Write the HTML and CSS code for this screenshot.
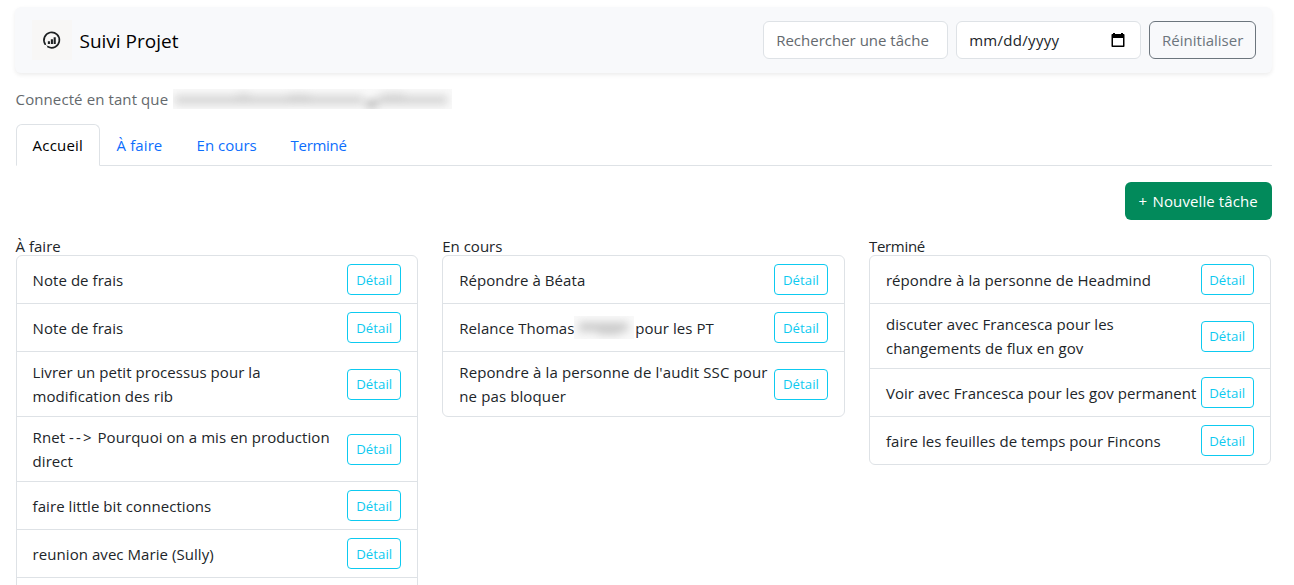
FILE: index.html
```html
<!DOCTYPE html>
<html lang="fr">
<head>
<meta charset="utf-8">
<title>Suivi Projet</title>
<link rel="stylesheet" href="styles.css">
</head>
<body>
<div class="container">
  <header class="topbar">
    <div class="brand">
      <span class="logo">
        <svg width="40" height="40" viewBox="0 0 40 40" fill="none">
          <path d="M13.2 24.2A7.7 7.7 0 1 1 16 26.8" stroke="#1d2022" stroke-width="1.7" stroke-linecap="round"/>
          <path d="M14.7 25.6l1.1.9" stroke="#1d2022" stroke-width="1"/>
          <path d="M16.9 21.3v2.7M19.9 19.3v4.7M22.7 17.2v6.8" stroke="#1d2022" stroke-width="2.1"/>
        </svg>
      </span>
      <span class="title">Suivi Projet</span>
    </div>
    <div class="filters">
      <input class="field" type="text" placeholder="Rechercher une tâche">
      <div class="field date"><span>mm/dd/yyyy</span>
        <svg width="14" height="14" viewBox="0 0 14 14"><path fill="#000" fill-rule="evenodd" d="M2 0h2v1h6V0h2v1h.5c.6 0 1 .4 1 1v11c0 .6-.4 1-1 1h-11c-.6 0-1-.4-1-1V2c0-.6.4-1 1-1H2zM2 5v7.5h10V5z"/></svg>
      </div>
      <button class="btn reset">Réinitialiser</button>
    </div>
  </header>
  <p class="user"><span>Connecté en tant que</span>
    <span class="redacted email">
      <svg width="279" height="20" viewBox="0 0 279 20"><g class="smudge">
        <path d="M2 11h188M204 11h70" stroke="#8b8b8b" stroke-width="8" opacity=".36"/>
        <path d="M64 6h13M115 7h22M210 6h22" stroke="#9a9a9a" stroke-width="4" opacity=".25"/>
        <path d="M193 15h11" stroke="#555" stroke-width="6" opacity=".5"/>
      </g></svg>
    </span>
  </p>
  <nav class="tabs">
    <a class="tab active">Accueil</a><a class="tab t-todo">À faire</a><a class="tab t-doing">En cours</a><a class="tab t-done">Terminé</a>
  </nav>
  <div class="actions"><button class="btn create"><span class="plus">+</span> Nouvelle tâche</button></div>
  <main class="board">
    <section>
      <h2>À faire</h2>
      <ul class="list">
        <li><span>Note de frais</span><button class="detail">Détail</button></li>
        <li><span>Note de frais</span><button class="detail">Détail</button></li>
        <li><span>Livrer un petit processus pour la<br>modification des rib</span><button class="detail">Détail</button></li>
        <li><span>Rnet <span class="arrow">--&gt;</span> Pourquoi on a mis en production<br>direct</span><button class="detail">Détail</button></li>
        <li><span>faire little bit connections</span><button class="detail">Détail</button></li>
        <li><span>reunion avec Marie (Sully)</span><button class="detail">Détail</button></li>
        <li></li>
      </ul>
    </section>
    <section>
      <h2>En cours</h2>
      <ul class="list">
        <li><span>Répondre à Béata</span><button class="detail">Détail</button></li>
        <li><span class="with-name"><span class="before">Relance Thomas</span><span class="redacted name"><svg width="60" height="23" viewBox="0 0 60 23"><path class="smudge" d="M5 11h49M24 14h22" stroke="#777" stroke-width="9" opacity=".36"/></svg></span><span>pour les PT</span></span><button class="detail">Détail</button></li>
        <li><span class="wide">Repondre à la personne de l'audit SSC pour<br>ne pas bloquer</span><button class="detail">Détail</button></li>
      </ul>
    </section>
    <section class="done">
      <h2>Terminé</h2>
      <ul class="list">
        <li><span>répondre à la personne de Headmind</span><button class="detail">Détail</button></li>
        <li><span>discuter avec Francesca pour les<br>changements de flux en gov</span><button class="detail">Détail</button></li>
        <li><span>Voir avec Francesca pour les gov permanent</span><button class="detail">Détail</button></li>
        <li><span>faire les feuilles de temps pour Fincons</span><button class="detail">Détail</button></li>
      </ul>
    </section>
  </main>
</div>
</body>
</html>
```
FILE: styles.css
```css
* { box-sizing: border-box; }
html { overflow: hidden; height: 100%; }
body { margin: 0; height: 100%; overflow: hidden; background: #fff; color: #212529; font: 15px/24px "Open Sans", "Noto Sans", sans-serif; }
button, input { font: inherit; letter-spacing: inherit; }
.container { width: 1256px; height: 578px; overflow: visible; margin-left: 15.6px; margin-top: 7px; }
body { display: flow-root; }
.topbar { height: 66px; margin: 0 -.6px; padding: 0 16px 0 17px; display: flex; justify-content: space-between; align-items: center; background: #f8f9fb; border-radius: 6px; box-shadow: 0 2px 4px rgba(0,0,0,.075); }
.brand { display: flex; align-items: center; gap: 7.5px; }
.logo { width: 40px; height: 40px; background: #f8f7f6; }
.logo svg { display: block; }
.title { padding-top: 2px; font-size: 19px; line-height: 30px; color: #000; white-space: nowrap; }
.filters { display: flex; gap: 8px; }
.field { width: 185px; height: 38px; padding: 6px 12px; border: 1px solid #dee2e6; border-radius: 6px; background: #fff; color: #212529; }
.field::placeholder { color: #64696e; opacity: 1; }
.date { display: flex; justify-content: space-between; align-items: center; padding-right: 15px; }
.date span { letter-spacing: .3px; }
.btn { height: 38px; padding: 0; border-radius: 6px; white-space: nowrap; }
.reset { width: 107px; border: 1px solid #6c757d; background: transparent; color: #6c757d; }
.user { display: flex; align-items: center; height: 24px; margin: 14px 0 13px; color: #64696d; }
.user > span:first-child { width: 157.4px; white-space: nowrap; letter-spacing: .1px; }
.redacted { overflow: hidden; flex: none; }
.redacted svg { display: block; }
.smudge { filter: blur(4px); fill: none; }
.email { width: 279px; height: 20px; background: #f9f9f9; }
.tabs { display: flex; height: 42px; border-bottom: 1px solid #dee2e6; }
.tab { height: 42px; padding: 9px 17px; color: #0d6efd; white-space: nowrap; }
.active { width: 84px; padding: 8px 16px; border: 1px solid #dee2e6; border-bottom-color: #fff; border-radius: 6px 6px 0 0; color: #000; background: #fff; letter-spacing: .2px; }
.t-todo { width: 80px; letter-spacing: .1px; }
.t-doing { width: 94px; }
.t-done { letter-spacing: -.3px; }
.actions { display: flex; justify-content: flex-end; margin-top: 16px; }
.create { width: 147px; border: 0; background: #028a5b; color: #fff; letter-spacing: .1px; }
.plus { margin-right: 1.5px; }
.board { display: grid; grid-template-columns: repeat(3, 1fr); gap: 24px; margin-top: 16px; align-items: start; }
h2 { margin: 0; height: 19px; font-size: 15px; font-weight: 400; line-height: 21px; }
.done h2 { letter-spacing: -.3px; }
.list { list-style: none; margin: 0; padding: 0; border: 1px solid #dee2e6; border-radius: 6px; }
.done .list { margin-right: .7px; }
.list li { display: flex; justify-content: space-between; align-items: center; min-height: 48px; padding: 8px 16px; border-bottom: 1px solid #dee2e6; white-space: nowrap; letter-spacing: .06px; }
.list li:last-child { min-height: 47px; border-bottom: 0; }
.list .wide { letter-spacing: .12px; }
.arrow { letter-spacing: 2.1px; }
.detail { flex: none; width: 54px; height: 31px; padding: 1px 0 0; border: 1px solid #0dcaf0; border-radius: 4px; background: transparent; color: #0dcaf0; font-size: 13.2px; line-height: 21px; }
.done .detail { width: 53.4px; }
.with-name { display: flex; align-items: center; }
.before { width: 115px; }
.name { width: 60px; height: 23px; margin-right: 1px; background: #f9f9f9; }
```
